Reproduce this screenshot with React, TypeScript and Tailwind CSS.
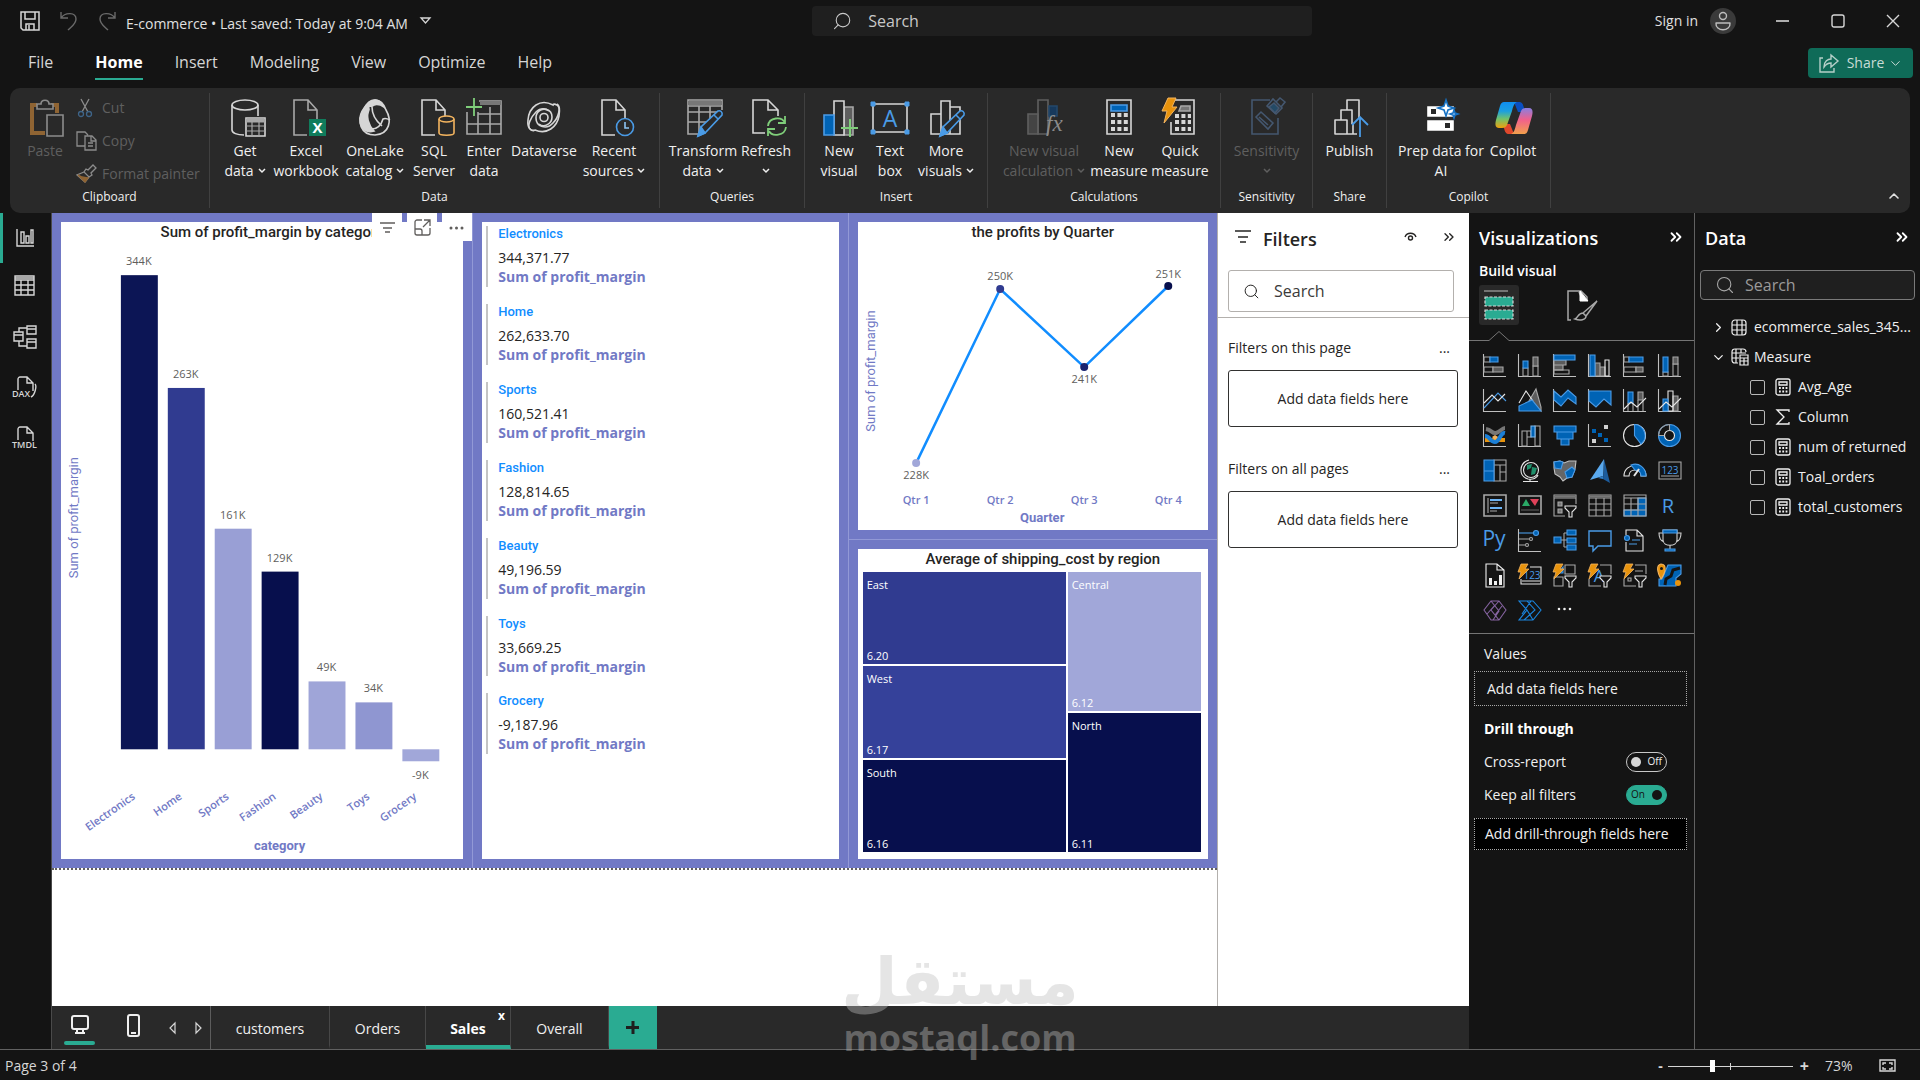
import type { ReactNode } from "react";
import { ChevronDown, ChevronRight, ChevronUp, ChevronsRight, Search } from "lucide-react";
import { clsx } from "clsx";

const LINE = "#d6d6d6";
const GRAY = "#a8a8a8";
const BLUE = "#4a9be6";
const FILL = "#0063b5";
const GREEN = "#7fce7a";
const ORANGE = "#f3b45f";

function Icon({
  w = 36,
  h = 40,
  inset = 0,
  stroke = LINE,
  sw = 1.6,
  children,
}: {
  w?: number;
  h?: number;
  inset?: number;
  stroke?: string;
  sw?: number;
  children: ReactNode;
}) {
  return (
    <svg
      width={w + inset}
      height={h}
      viewBox={`${-inset} 0 ${w + inset} ${h}`}
      fill="none"
      stroke={stroke}
      strokeWidth={sw}
      className="shrink-0 overflow-visible"
      aria-hidden
    >
      {children}
    </svg>
  );
}

const docPath = "M16 37H3V2h14l9 10v9M17 2v10h9";

const pencil = (
  <g stroke={BLUE} fill="#292929">
    <path d="M12 38l3-9 17-16c2-1 5 1 4 4L19 35z" />
    <path d="M12 38l3-9 4 6z" fill={BLUE} />
    <path d="M28 17l4 4" />
  </g>
);

const bolt = <path d="M7 0h8l-4 9h5L3 25l3-12H1z" fill="#e8930c" stroke={ORANGE} strokeWidth="1" />;

const ribbonIcons: Record<string, ReactNode> = {
  getData: (
    <Icon inset={5}>
      <ellipse cx="15" cy="7" rx="13" ry="5" />
      <path d="M2 7v25c0 3 5 5 12 5M28 7v11" />
      <path d="M16 20h19v18H16z" fill="#292929" />
      <path d="M16 22.5h19" strokeWidth="4" stroke={GRAY} />
      <path d="M16 28h19M16 33h19M22 24v14M29 24v14" stroke={GRAY} strokeWidth="1.2" />
    </Icon>
  ),
  excel: (
    <Icon inset={5}>
      <path d="M16 37H3V2h14l9 10v9M17 2v10h9" stroke={GRAY} />
      <path d="M18 21h17v17H18z" fill="#107c5c" stroke="none" />
      <text x="26.5" y="35" textAnchor="middle" fontSize="15" fontWeight="700" fill="#fff" stroke="none">
        X
      </text>
    </Icon>
  ),
  oneLake: (
    <Icon>
      <path d="M7 11c6-13 18-11 22 1 6 10 4 24-11 25C4 37-1 24 7 11z" />
      <path d="M18 2c-7 1-16 12-15 21s7 12 14 10c-6-6-8-15-5-21 4-8 11-6 15-3-2-5-6-7-9-7z" fill={LINE} />
      <path d="M14 9c0 9 4 15 11 19" stroke="#292929" strokeWidth="3" />
      <path d="M15 9c0 9 4 14 10 19M12 31c8 1 12-3 14-10 2-1 5 0 7 1" />
    </Icon>
  ),
  sql: (
    <Icon inset={5}>
      <path d={docPath} />
      <g stroke={ORANGE} fill="#292929">
        <path d="M20 21v14c0 3 15 3 15 0V21" />
        <ellipse cx="27.5" cy="21" rx="7.5" ry="3" />
      </g>
    </Icon>
  ),
  enter: (
    <Icon>
      <path d="M1 14v22h34V3H13M1 26h34M12 14v22M24 9v27M12 16h23" stroke={GRAY} />
      <path d="M14 5h21" stroke="#777" strokeWidth="4" />
      <path d="M0 9h16M8 0v18" stroke={GREEN} strokeWidth="1.8" />
    </Icon>
  ),
  dataverse: (
    <Icon>
      <path d="M23 13c-5-4-13-1-13 7 0 9 11 12 17 5 6-6 8-16 4-18s-4 0-4 0C14 0 3 9 2 22c-1 8 3 11 6 10" />
      <path d="M13 26c5 4 13 0 13-7 0-8-10-11-16-5C4 20 1 28 4 31s5 1 5 1c12 5 22-3 24-14 1-6 1-10-2-12" />
      <circle cx="18" cy="19.500" r="4" />
    </Icon>
  ),
  recent: (
    <Icon inset={5}>
      <path d={docPath} />
      <circle cx="26" cy="29" r="8.500" stroke={BLUE} fill="#292929" />
      <path d="M26 24v6h4" stroke="#8cc3f2" />
    </Icon>
  ),
  transform: (
    <Icon w={38} inset={4}>
      <path d="M14 36H2V2h34v10M2 14h31M2 24h20M13 8v28M24 8v14M2 8h34" stroke={GRAY} />
      <path d="M2 5h34" stroke="#777" strokeWidth="4" />
      {pencil}
    </Icon>
  ),
  refresh: (
    <Icon inset={6}>
      <path d="M14 35H2V2h15l10 10v6M17 2v10h10" />
      <g stroke={GREEN} strokeWidth="1.800">
        <path d="M17 28c1-9 14-10 17-3M34 18v7h-7M35 29c-1 9-14 10-17 4M17 38v-7h7" />
      </g>
    </Icon>
  ),
  newVisual: (
    <Icon inset={2}>
      <path d="M22 9h9v28h-9z" fill="#5f5f5f" stroke={GRAY} />
      <path d="M12 3h10v34H12z" fill="#292929" />
      <path d="M2 17h10v20H2z" fill={FILL} stroke={BLUE} />
      <path d="M19 30h17M28 21v18" stroke={GREEN} strokeWidth="2" />
    </Icon>
  ),
  textBox: (
    <Icon w={40}>
      <path d="M3 6h34v28H3z" />
      <path d="M1 4h4v4H1zM35 4h4v4h-4zM1 32h4v4H1zM35 32h4v4h-4z" fill={BLUE} stroke={BLUE} strokeWidth="1" />
      <text x="20" y="29" textAnchor="middle" fontSize="23" fill={BLUE} stroke="none">
        A
      </text>
    </Icon>
  ),
  moreVisuals: (
    <Icon w={38} inset={2}>
      <path d="M13 16H3v20h10zM13 3h9v33h-9zM22 9h10v27H22z" />
      {pencil}
    </Icon>
  ),
  visualCalc: (
    <Icon stroke="#5f5f5f">
      <path d="M2 16h10v20H2z" fill="#444" />
      <path d="M12 2h10v34H12z" />
      <path d="M23 8h8v10h-8z" fill="#17395c" stroke="#24486b" />
      <text x="20" y="33" fontSize="23" fontStyle="italic" fontFamily="Liberation Serif" fill="#8b8b8b" stroke="none">
        fx
      </text>
    </Icon>
  ),
  measure: (
    <Icon w={26}>
      <path d="M1 2h24v34H1z" />
      <path d="M5 7h16v6H5z" fill={FILL} stroke={BLUE} />
      <path d="M5 17h17M5 24h17M5 31h17" strokeWidth="4" strokeDasharray="4 2.400" />
    </Icon>
  ),
  quick: (
    <Icon w={34}>
      <path d="M12 2h19v34H8V24" />
      <path d="M18 8h9v5H16z" fill="#777" stroke={GRAY} />
      <path d="M12 18h16M12 24h16M12 31h16" strokeWidth="4" strokeDasharray="4 2.400" />
      <g transform="translate(-2 0)">{bolt}</g>
    </Icon>
  ),
  sensitivity: (
    <Icon inset={2} stroke="#44576f">
      <path d="M20 2H2v34h26V20" />
      <path d="M6 19l5-5 12 11-5 6zM9 19l9 8M17 8l6-7 9 9-6 6zM26 4l4-4 5 4-4 5" />
      <path d="M19 9l6 6 4-5-5-5z" fill="#244a66" />
    </Icon>
  ),
  publish: (
    <Icon inset={2}>
      <path d="M2 36V22h12v14zM8 22V12h11v14M14 12V2h12v18M14 36h10M20 26v10" strokeLinejoin="round" />
      <path d="M27 39V20M19 27l8-8 8 8" stroke={BLUE} strokeWidth="1.800" />
    </Icon>
  ),
  prep: (
    <Icon w={34} inset={2}>
      <path d="M3 9h25v9H3zM3 23h25v9H3z" fill="#fff" stroke="#fff" />
      <path d="M6 11h5v5H6zM20 25h5v5h-5z" fill="#292929" stroke="none" />
      <path d="M21 2l2 6 6 2-6 2-2 6-2-6-6-2 6-2z" fill="#fff" stroke="#1672c4" />
      <path d="M29 12l1 3 3 1-3 1-1 3-1-3-3-1 3-1z" fill="#cfe8ff" stroke="#1672c4" />
    </Icon>
  ),
  copilot: (
    <Icon w={38} h={40} stroke="none">
      <defs>
        <linearGradient id="cpA" x1="0" y1="0" x2="0" y2="1">
          <stop offset="0" stopColor="#0f8ef0" />
          <stop offset=".350" stopColor="#1b9fe0" />
          <stop offset=".650" stopColor="#72c26a" />
          <stop offset="1" stopColor="#f0a00c" />
        </linearGradient>
        <linearGradient id="cpB" x1="0" y1="1" x2="0" y2="0">
          <stop offset="0" stopColor="#8a7fe0" />
          <stop offset=".450" stopColor="#f0608c" />
          <stop offset="1" stopColor="#f2a04c" />
        </linearGradient>
      </defs>
      <g transform="translate(1 3)">
        <path d="M19 1h5c3 0 4 2 5 6l2 4h-8z" fill="#0a4fc0" />
        <path d="M19 33h-5c-3 0-4-2-5-6l-2-4h8z" fill="#e0482c" />
        <path d="M9 1h13c-3 1-4 5-5 9l-5 14c-1 2-2 3-5 3H4c-4 0-4-4-3-8L5 5c1-3 2-4 4-4z" fill="url(#cpA)" />
        <path
          d="M9 1h13c-3 1-4 5-5 9l-5 14c-1 2-2 3-5 3H4c-4 0-4-4-3-8L5 5c1-3 2-4 4-4z"
          fill="url(#cpB)"
          transform="rotate(180 19 17)"
        />
      </g>
    </Icon>
  ),
};

type Tool = { icon: string; lines: string[]; width: string; menu?: boolean; off?: boolean };

const groups: { name: string; width: string; pad: string; tools: Tool[] }[] = [
  {
    name: "Data",
    width: "w-[450px]",
    pad: "pl-[11px]",
    tools: [
      { icon: "getData", lines: ["Get", "data"], width: "w-12", menu: true },
      { icon: "excel", lines: ["Excel", "workbook"], width: "w-[74px]" },
      { icon: "oneLake", lines: ["OneLake", "catalog"], width: "w-16", menu: true },
      { icon: "sql", lines: ["SQL", "Server"], width: "w-[54px]" },
      { icon: "enter", lines: ["Enter", "data"], width: "w-[46px]" },
      { icon: "dataverse", lines: ["Dataverse"], width: "w-[74px]" },
      { icon: "recent", lines: ["Recent", "sources"], width: "w-[66px]", menu: true },
    ],
  },
  {
    name: "Queries",
    width: "w-[145px]",
    pad: "pl-2",
    tools: [
      { icon: "transform", lines: ["Transform", "data"], width: "w-[70px]", menu: true },
      { icon: "refresh", lines: ["Refresh", ""], width: "w-14", menu: true },
    ],
  },
  {
    name: "Insert",
    width: "w-[183px]",
    pad: "pl-2",
    tools: [
      { icon: "newVisual", lines: ["New", "visual"], width: "w-[52px]" },
      { icon: "textBox", lines: ["Text", "box"], width: "w-[50px]" },
      { icon: "moreVisuals", lines: ["More", "visuals"], width: "w-[62px]", menu: true },
    ],
  },
  {
    name: "Calculations",
    width: "w-[233px]",
    pad: "pl-3",
    tools: [
      { icon: "visualCalc", lines: ["New visual", "calculation"], width: "w-[88px]", menu: true, off: true },
      { icon: "measure", lines: ["New", "measure"], width: "w-[62px]" },
      { icon: "quick", lines: ["Quick", "measure"], width: "w-[60px]" },
    ],
  },
  {
    name: "Sensitivity",
    width: "w-[92px]",
    pad: "pl-0",
    tools: [{ icon: "sensitivity", lines: ["Sensitivity", ""], width: "w-full", menu: true, off: true }],
  },
  {
    name: "Share",
    width: "w-[74px]",
    pad: "pl-0",
    tools: [{ icon: "publish", lines: ["Publish"], width: "w-full" }],
  },
  {
    name: "Copilot",
    width: "w-[164px]",
    pad: "pl-[10px]",
    tools: [
      { icon: "prep", lines: ["Prep data for", "AI"], width: "w-[88px]" },
      { icon: "copilot", lines: ["Copilot"], width: "w-14" },
    ],
  },
];

function TitleBar() {
  return (
    <div className="flex h-[42px] shrink-0 items-center pl-5 text-sm text-[#e0e0e0]">
      <div className="flex flex-1 items-center">
        <button aria-label="Save">
          <Icon w={20} h={20} sw={1.5}>
            <path d="M1 1h18v18H3l-2-2zM5 1v7h10V1M6 19v-6h8v6M9 14v5" />
          </Icon>
        </button>
        <button aria-label="Undo" className="ml-5">
          <Icon w={18} h={20} stroke="#6a6a6a" sw={1.4}>
            <path d="M1 1v6h7M1 7c4-6 15-6 15 1 0 5-4 7-8 11" />
          </Icon>
        </button>
        <button aria-label="Redo" className="ml-5">
          <Icon w={18} h={20} stroke="#6a6a6a" sw={1.4}>
            <path d="M17 1v6h-7M17 7C13 1 2 1 2 8c0 5 4 7 8 11" />
          </Icon>
        </button>
        <button className="ml-2.5 flex items-center gap-3">
          <span className="pt-1.5">E-commerce • Last saved: Today at 9:04 AM</span>
          <Icon w={12} h={8} sw={1.3}>
            <path d="M1 1h9L5.500 6z" />
          </Icon>
        </button>
      </div>
      <label className="flex h-[30px] w-[500px] items-center gap-4 rounded bg-[#1f1f1f] px-5 text-[#c8c8c8]">
        <Search size={22} strokeWidth={1.3} className="-scale-x-100" />
        <input
          aria-label="Search"
          placeholder="Search"
          className="w-full bg-transparent text-base outline-none placeholder:text-[#c8c8c8]"
        />
      </label>
      <div className="flex w-[608px] items-center justify-end pr-5">
        <button>Sign in</button>
        <span className="ml-3 grid h-[26px] w-[26px] place-items-center rounded-full bg-[#3a3a3a]">
          <Icon w={16} h={20} sw={1.4} stroke="#bdbdbd">
            <circle cx="8" cy="5" r="3.500" />
            <path d="M1 12h14c1 9-15 9-14 0z" strokeLinejoin="round" />
          </Icon>
        </span>
        <button aria-label="Minimize" className="ml-10">
          <Icon w={14} h={14}>
            <path d="M0 7h13" />
          </Icon>
        </button>
        <button aria-label="Maximize" className="ml-[41px]">
          <Icon w={14} h={14} sw={1.4}>
            <rect x="1" y="1" width="12" height="12" rx="2" />
          </Icon>
        </button>
        <button aria-label="Close" className="ml-[41px]">
          <Icon w={14} h={14} sw={1.4}>
            <path d="M1 1l12 12M13 1L1 13" />
          </Icon>
        </button>
      </div>
    </div>
  );
}

const menu = ["File", "Home", "Insert", "Modeling", "View", "Optimize", "Help"];

function MenuBar() {
  return (
    <nav className="flex h-[46px] shrink-0 items-start justify-between pl-7 pr-[7px] pt-[6px]">
      <div className="flex gap-8 pt-px text-base text-[#d6d6d6]">
        {menu.map((item) => (
          <button
            key={item}
            className={clsx(
              "border-b-2 pb-[3px] leading-[26px]",
              item === "File" && "mr-2.5",
              item === "Home" ? "border-[#2aab92] font-bold text-white" : "border-transparent",
            )}
          >
            {item}
          </button>
        ))}
      </div>
      <button className="flex h-[30px] w-[105px] items-center justify-center gap-2 rounded bg-[#0f6b58] text-sm text-[#c8dcd6]">
        <Icon w={21} h={20} sw={1.4} stroke="#b5cfc8">
          <path d="M5 5H2v14h14v-4M6 14c0-6 4-8 7-8V2l7 6-7 6v-4c-3 0-5 1-7 4z" />
        </Icon>
        <span className="flex items-center gap-1">
          Share
          <ChevronDown size={15} strokeWidth={1.6} />
        </span>
      </button>
    </nav>
  );
}

function Caret() {
  return (
    <svg width="8" height="6" viewBox="0 0 8 6" fill="none" stroke="currentColor" strokeWidth="1.500" className="inline" aria-hidden>
      <path d="M1 1l3 3 3-3" />
    </svg>
  );
}

function ToolButton({ tool }: { tool: Tool }) {
  return (
    <button
      className={clsx(
        "flex flex-col items-center whitespace-nowrap text-sm leading-5",
        tool.width,
        tool.off ? "text-[#5f5f5f]" : "text-[#f0f0f0]",
      )}
    >
      {ribbonIcons[tool.icon]}
      <span className="mt-[3px] block">{tool.lines[0]}</span>
      <span className="flex h-5 items-center gap-1">
        {tool.lines[1]}
        {tool.menu && <Caret />}
      </span>
    </button>
  );
}

function Ribbon() {
  return (
    <div className="mx-[10px] flex h-[125px] shrink-0 items-stretch rounded-[10px] bg-[#292929]">
      <section className="my-[5px] flex w-[200px] flex-col justify-between border-r border-[#404040] pb-0.5 pt-[5px] text-sm text-[#5f5f5f]">
        <div className="flex">
          <button className="ml-3 flex w-[46px] flex-col items-center leading-5">
            <Icon w={36} inset={4} stroke="#8c8c8c">
              <path d="M8 7H3v28h13M22 7h6v8" stroke="#8f6433" strokeWidth="4" />
              <path d="M8 11V6h4c0-5 8-5 8 0h4v5z" fill="#292929" />
              <path d="M18 17h16v21H18z" fill="#292929" />
            </Icon>
            <span className="mt-[3px]">Paste</span>
          </button>
          <div className="ml-2 flex flex-col gap-[13px]">
            <button className="flex items-center gap-2 leading-5">
              <Icon w={18} h={20} stroke="#8c8c8c" sw={1.3}>
                <path d="M5 1l7 13M13 1L6 14" />
                <circle cx="5" cy="16" r="2.500" stroke="#3e6488" />
                <circle cx="13" cy="16" r="2.500" stroke="#3e6488" />
              </Icon>
              Cut
            </button>
            <button className="flex items-center gap-1 leading-5">
              <Icon w={22} h={20} stroke="#8c8c8c" sw={1.3}>
                <path d="M9 15H1V1h8l3 3M9 5h7l4 4v10H9zM15 5v5h5M12 12h5M12 15h5" />
              </Icon>
              Copy
            </button>
            <button className="flex items-center gap-1 leading-5">
              <Icon w={22} h={20} stroke="#8c8c8c" sw={1.3}>
                <path d="M12 6l5-5 3 3-5 5 1 2-3 2-5-5 2-3zM8 8L1 11l8 7 4-5" />
                <path d="M2 11l7 7 3-4-6-1z" fill="#8f6433" stroke="#8f6433" />
              </Icon>
              Format painter
            </button>
          </div>
        </div>
        <p className="text-center text-xs leading-[18px] text-[#f0f0f0]">Clipboard</p>
      </section>
      {groups.map((group) => (
        <section
          key={group.name}
          className={clsx(
            "my-[5px] flex flex-col justify-between border-r border-[#404040] pb-0.5 pt-[5px]",
            group.width,
          )}
        >
          <div className={clsx("flex", group.pad)}>
            {group.tools.map((tool) => (
              <ToolButton key={tool.icon} tool={tool} />
            ))}
          </div>
          <p className="text-center text-xs leading-[18px] text-[#f0f0f0]">{group.name}</p>
        </section>
      ))}
      <button aria-label="Collapse ribbon" className="mb-[9px] ml-auto mr-2 self-end text-[#e0e0e0]">
        <ChevronUp size={16} strokeWidth={2.4} />
      </button>
    </div>
  );
}

const docMini = "M6 14V3c0-1 1-2 2-2h7l6 6v8M15 1v6h6";

const views = [
  {
    name: "Report view",
    icon: <path d="M5 3v17h17M9 6h3v11H9zM14 10h3v7h-3zM19 4h2v13h-2z" />,
  },
  { name: "Table view", icon: <path d="M3 0h19v19H3zM3 4h19M3 9h19M3 14h19M9 4v15M16 4v15M3 2h19" /> },
  {
    name: "Model view",
    icon: <path d="M2 6h9v9H2zM2 9h9M15 0h9v8h-9zM15 3h9M15 13h9v9h-9zM15 16h9M7 6V2h8M7 15v5h8" />,
  },
  {
    name: "DAX query view",
    icon: (
      <>
        <path d={docMini} />
        <path d="M23 8c2 2 0 11-4 13" />
        <text x="0" y="21" fontSize="9" fontWeight="600" fill={LINE} stroke="none">
          DAX
        </text>
      </>
    ),
  },
  {
    name: "TMDL view",
    icon: (
      <>
        <path d={docMini} />
        <text x="0" y="22" fontSize="9" fontWeight="600" fill={LINE} stroke="none">
          TMDL
        </text>
      </>
    ),
  },
];

function ViewRail() {
  return (
    <nav className="flex w-[52px] shrink-0 flex-col border-r border-[#4a4a4a]">
      {views.map((view, i) => (
        <button
          key={view.name}
          aria-label={view.name}
          className={clsx(
            "grid h-[50px] place-items-center border-l-[3px] pr-1",
            i === 0 ? "border-[#2aab92]" : "border-transparent",
          )}
        >
          <Icon w={26} h={25} sw={1.4}>
            {view.icon}
          </Icon>
        </button>
      ))}
    </nav>
  );
}

const bars = [
  { name: "Electronics", label: "344K", top: 53, height: 475, color: "#0c1555" },
  { name: "Home", label: "263K", top: 166, height: 362, color: "#303b90" },
  { name: "Sports", label: "161K", top: 307, height: 221, color: "#999fd5" },
  { name: "Fashion", label: "129K", top: 350, height: 178, color: "#070f4d" },
  { name: "Beauty", label: "49K", top: 460, height: 68, color: "#9fa5d8" },
  { name: "Toys", label: "34K", top: 481, height: 47, color: "#8f96d1" },
  { name: "Grocery", label: "-9K", top: 528, height: 12, color: "#a1a7d9" },
];

function CardTitle({ children }: { children: ReactNode }) {
  return (
    <h2 className="h-5 shrink-0 pl-5 text-center font-[Roboto,sans-serif] text-[15px] font-medium leading-5 text-[#252423]">
      {children}
    </h2>
  );
}

function BarChart() {
  return (
    <div className="relative flex flex-col bg-[#7179c5] p-[9px]">
      <div className="flex min-h-0 flex-1 flex-col bg-white">
        <CardTitle>Sum of profit_margin by category</CardTitle>
        <svg viewBox="0 20 403 618" className="min-h-0 w-full flex-1" fontSize="11" fill="#605e5c" textAnchor="middle">
          {bars.map((bar, i) => (
            <g key={bar.name}>
              <rect x={60 + 47 * i} y={bar.top} width="37" height={bar.height} fill={bar.color} />
              <text x={78 + 47 * i} y={bar.name === "Grocery" ? 558 : bar.top - 10}>
                {bar.label}
              </text>
              <text
                textAnchor="end"
                fontSize="11"
                fontWeight="600"
                fill="#7179c5"
                transform={`translate(${75 + 47 * i} 577) rotate(-35)`}
              >
                {bar.name}
              </text>
            </g>
          ))}
          <text fontSize="13" fill="#7179c5" fontFamily="Roboto" transform="translate(17 296) rotate(-90)">
            Sum of profit_margin
          </text>
          <text x="219" y="629" fontSize="13" fontWeight="700" fill="#7179c5" fontFamily="Roboto">
            category
          </text>
        </svg>
      </div>
      <div className="absolute right-0 top-0 flex gap-[5px]">
        {["Filter", "Focus mode", "More options"].map((name) => (
          <button key={name} aria-label={name} className="grid h-7 w-[30px] place-items-center bg-white">
            <Icon w={18} h={18} sw={1.3} stroke="#605e5c">
              {name === "Filter" && <path d="M2 5h15M5 10h9M7 14h5" />}
              {name === "Focus mode" && (
                <path d="M9 2H4c-1 0-2 1-2 2v11c0 1 1 2 2 2h11c1 0 2-1 2-2v-5M11 2h6v6M17 2l-7 7M2 11h5c1 0 2 1 2 2v4" />
              )}
              {name === "More options" && <path d="M3 10h14" strokeWidth="3" strokeLinecap="round" strokeDasharray="0 5.500" />}
            </Icon>
          </button>
        ))}
      </div>
    </div>
  );
}

const totals = [
  ["Electronics", "344,371.77"],
  ["Home", "262,633.70"],
  ["Sports", "160,521.41"],
  ["Fashion", "128,814.65"],
  ["Beauty", "49,196.59"],
  ["Toys", "33,669.25"],
  ["Grocery", "-9,187.96"],
];

function MultiRowCard() {
  return (
    <div className="flex flex-col bg-[#7179c5] p-[9px]">
      <ul className="grid flex-1 auto-rows-fr bg-white pb-[88px] pl-1 pt-1">
        {totals.map(([name, value]) => (
          <li key={name} className="mb-[17px] border-l-2 border-[#c4c4c4] pl-2.5">
            <p className="font-[Roboto,sans-serif] text-[13px] font-medium leading-4 text-[#118dff]">{name}</p>
            <p className="mt-1.5 text-sm leading-5 text-[#252423]">{value}</p>
            <p className="text-sm font-bold leading-[18px] text-[#7179c5]">Sum of profit_margin</p>
          </li>
        ))}
      </ul>
    </div>
  );
}

const quarters = [
  { x: 58, y: 241, ly: 257, label: "228K", color: "#a1a7d9" },
  { x: 142, y: 67, ly: 58, label: "250K", color: "#303b90" },
  { x: 226, y: 145, ly: 161, label: "241K", color: "#1a2470" },
  { x: 310, y: 64, ly: 56, label: "251K", color: "#070f4d" },
];

function LineChart() {
  return (
    <div className="flex min-h-0 flex-col bg-[#7179c5] p-[9px]">
      <div className="flex min-h-0 flex-1 flex-col bg-white">
        <CardTitle>the profits by Quarter</CardTitle>
        <svg viewBox="0 20 350 288" className="min-h-0 w-full flex-1" fontSize="11" fill="#605e5c" textAnchor="middle">
          <polyline
            points={quarters.map((q) => `${q.x},${q.y}`).join(" ")}
            fill="none"
            stroke="#118dff"
            strokeWidth="2.500"
          />
          {quarters.map((q, i) => (
            <g key={q.label}>
              <circle cx={q.x} cy={q.y} r="4" fill={q.color} />
              <text x={q.x} y={q.ly}>
                {q.label}
              </text>
              <text x={q.x} y="282" fontWeight="600" fill="#7179c5">
                Qtr {i + 1}
              </text>
            </g>
          ))}
          <text fontSize="13" fill="#7179c5" fontFamily="Roboto" transform="translate(17 149) rotate(-90)">
            Sum of profit_margin
          </text>
          <text x="184" y="300" fontSize="13" fontWeight="700" fill="#7179c5" fontFamily="Roboto">
            Quarter
          </text>
        </svg>
      </div>
    </div>
  );
}

function Region({ name, value, color }: { name: string; value: string; color: string }) {
  return (
    <div
      className={clsx("flex flex-1 flex-col justify-between px-1 pt-[5px] text-[11px] leading-4 text-white", color)}
    >
      <span>{name}</span>
      <span>{value}</span>
    </div>
  );
}

function Treemap() {
  return (
    <div className="flex min-h-0 flex-col bg-[#7179c5] p-[9px]">
      <div className="flex flex-1 flex-col bg-white">
        <CardTitle>Average of shipping_cost by region</CardTitle>
        <div className="mb-[7px] ml-[5px] mr-[7px] mt-[3px] grid flex-1 grid-cols-[204fr_134fr] gap-0.5">
          <div className="flex flex-col gap-0.5">
            <Region name="East" value="6.20" color="bg-[#303b90]" />
            <Region name="West" value="6.17" color="bg-[#35419a]" />
            <Region name="South" value="6.16" color="bg-[#070f4d]" />
          </div>
          <div className="flex flex-col gap-0.5">
            <Region name="Central" value="6.12" color="bg-[#a1a7d9]" />
            <Region name="North" value="6.11" color="bg-[#070f4d]" />
          </div>
        </div>
      </div>
    </div>
  );
}

function ReportCanvas() {
  return (
    <main className="min-w-0 flex-1 border-r border-[#b3b0ad] bg-white">
      <div className="grid aspect-video w-full grid-cols-[421fr_375fr_369fr] gap-px bg-[#9299d6]">
        <BarChart />
        <MultiRowCard />
        <div className="grid min-h-0 grid-rows-[326fr_328fr] gap-px">
          <LineChart />
          <Treemap />
        </div>
      </div>
      <div className="border-t-2 border-dotted border-[#605e5c]" />
    </main>
  );
}

function DropBox({ title }: { title: string }) {
  return (
    <section className="mb-8 pl-[10px] pr-[11px] text-[#252423]">
      <div className="flex items-center justify-between pr-2 text-sm leading-5">
        <h3>{title}</h3>
        <button aria-label={`${title} options`}>...</button>
      </div>
      <button className="mt-3 block h-[57px] w-full rounded-[3px] border border-[#323130] text-sm">
        Add data fields here
      </button>
    </section>
  );
}

function FiltersPane() {
  return (
    <aside className="w-[251px] shrink-0 bg-white text-[#252423]">
      <div className="flex h-[57px] items-center pb-[9px] pl-[17px] pr-3">
        <Icon w={16} h={14} stroke="#252423">
          <path d="M0 1h16M3 7h10M5 12h6" />
        </Icon>
        <h2 className="ml-3 flex-1 pt-1 text-lg font-semibold leading-6">Filters</h2>
        <button aria-label="Show filter pane" className="mr-6">
          <Icon w={13} h={10} sw={1.4} stroke="#252423">
            <path d="M1 5c2-5 9-5 11 0" />
            <circle cx="6.500" cy="6" r="2" />
          </Icon>
        </button>
        <button aria-label="Collapse filters">
          <ChevronsRight size={16} />
        </button>
      </div>
      <div className="border-b border-[#b3b0ad] pb-[5px] pl-[10px] pr-[15px]">
        <label className="flex h-[42px] items-center gap-3.5 rounded-[3px] border border-[#b3b0ad] pl-3.5">
          <Search size={17} strokeWidth={1.4} className="shrink-0" />
          <input
            aria-label="Search filters"
            placeholder="Search"
            className="w-full bg-transparent text-base outline-none placeholder:text-[#3b3a39]"
          />
        </label>
      </div>
      <div className="pt-5">
        <DropBox title="Filters on this page" />
        <DropBox title="Filters on all pages" />
      </div>
    </aside>
  );
}

const axis = <path d="M.500 0v22.500H23" stroke="#c0c0c0" />;
const boltSmall = <path d="M3 0h7L7 5h4L1 15l2-7H0z" fill="#e8930c" stroke={ORANGE} strokeWidth=".8" />;
const funnelSmall = <path d="M12 12h11v2l-4 4v5h-3v-5l-4-4z" fill="#141414" stroke="#e6e6e6" />;

const visuals: { name: string; art: ReactNode }[] = [
  {
    name: "Stacked bar",
    art: (
      <>
        {axis}
        <path d="M1 3h6v5H1zM1 13h9v5H1z" />
        <path d="M7 3h8v5H7z" fill={FILL} stroke={BLUE} />
        <path d="M10 13h10v5H10z" fill="#5c5c5c" />
      </>
    ),
  },
  {
    name: "Stacked column",
    art: (
      <>
        {axis}
        <path d="M5 14h5v8H5zM15 12h5v10h-5z" />
        <path d="M5 7h5v7H5z" fill={FILL} stroke={BLUE} />
        <path d="M15 3h5v9h-5z" fill="#5c5c5c" />
      </>
    ),
  },
  {
    name: "Clustered bar",
    art: (
      <>
        {axis}
        <path d="M1 6h12v5H1zM1 11h9v5H1z" fill="#5c5c5c" />
        <path d="M1 16h15v4H1z" />
        <path d="M1 1h21v5H1z" fill={FILL} stroke={BLUE} />
      </>
    ),
  },
  {
    name: "Clustered column",
    art: (
      <>
        {axis}
        <path d="M7 9h5v13H7zM12 13h5v9h-5z" fill="#5c5c5c" />
        <path d="M17 6h4v16h-4z" stroke="#e6e6e6" />
        <path d="M2 1h5v21H2z" fill={FILL} stroke={BLUE} />
      </>
    ),
  },
  {
    name: "100% stacked bar",
    art: (
      <>
        {axis}
        <path d="M1 3h5v5H1zM1 13h12v5H1z" />
        <path d="M6 3h14v5H6z" fill={FILL} stroke={BLUE} />
        <path d="M13 13h7v5h-7z" fill="#5c5c5c" />
      </>
    ),
  },
  {
    name: "100% stacked column",
    art: (
      <>
        {axis}
        <path d="M5 18h5v4H5zM15 10h5v12h-5z" />
        <path d="M5 3h5v15H5z" fill={FILL} stroke={BLUE} />
        <path d="M15 3h5v7h-5z" fill="#5c5c5c" />
      </>
    ),
  },
  {
    name: "Line",
    art: (
      <>
        {axis}
        <path d="M1 19L15 4l8 8" stroke={BLUE} />
        <path d="M1 14l8-8 6 6 7-7" stroke="#e6e6e6" />
      </>
    ),
  },
  {
    name: "Area",
    art: (
      <>
        <path d="M11 12l7-12 5 18v4z" fill="#5c5c5c" />
        <path d="M1 14L8 2l7 10" stroke="#e6e6e6" />
        <path d="M1 22v-5l13-6 9 11z" fill={FILL} stroke={BLUE} />
      </>
    ),
  },
  {
    name: "Stacked area",
    art: (
      <>
        {axis}
        <path d="M1 2l7 6 7-7 8 7v7l-8-6-7 8-7-6z" fill={FILL} stroke={BLUE} />
      </>
    ),
  },
  {
    name: "100% area",
    art: (
      <>
        {axis}
        <path d="M1 2h22v14l-7-6-8 8-7-6z" fill={FILL} stroke={BLUE} />
      </>
    ),
  },
  {
    name: "Line and stacked column",
    art: (
      <>
        {axis}
        <path d="M5 3h5v11H5z" fill={FILL} stroke={BLUE} />
        <path d="M15 3h5v8h-5z" fill="#5c5c5c" />
        <path d="M5 14v8M10 14v8M15 11v11M20 11v11" />
        <path d="M1 20l7-7 6 5 9-9" stroke="#e6e6e6" />
      </>
    ),
  },
  {
    name: "Line and clustered column",
    art: (
      <>
        {axis}
        <path d="M15 7h5v15h-5z" fill="#5c5c5c" />
        <path d="M10 2h5v20h-5z" stroke="#e6e6e6" />
        <path d="M5 10h5v12H5z" fill={FILL} stroke={BLUE} />
        <path d="M1 20l7-7 6 5 9-9" stroke="#e6e6e6" />
      </>
    ),
  },
  {
    name: "Ribbon",
    art: (
      <>
        {axis}
        <path d="M2 16h20" stroke="#e8930c" strokeWidth="4" />
        <path d="M3 5c6 1 6 5 10 4s6-5 9-5" stroke="#777" strokeWidth="4" />
        <path d="M2 12c5 0 5 6 10 6s5-10 10-9" stroke="#1b7fd6" strokeWidth="4" />
        <path d="M9 13l3-2 3 2-3 3z" fill={ORANGE} stroke="none" />
      </>
    ),
  },
  {
    name: "Waterfall",
    art: (
      <>
        {axis}
        <path d="M4 7h5v15H4zM9 7h4v6H9zM17 2h5v20h-5z" />
        <path d="M13 2h4v11h-4z" fill={FILL} stroke="#7db9ef" />
      </>
    ),
  },
  {
    name: "Funnel",
    art: (
      <g fill={FILL} stroke={BLUE}>
        <path d="M1 2h22v6H1zM4 8h16v7H4zM8 15h8v6H8z" />
      </g>
    ),
  },
  {
    name: "Scatter",
    art: (
      <>
        {axis}
        <path d="M4 5h4v4H4zM10 9h4v4h-4zM16 14h4v4h-4z" fill={FILL} stroke="none" />
        <path d="M16 1h4v4h-4zM4 15h4v4H4z" fill="#d0d0d0" stroke="none" />
      </>
    ),
  },
  {
    name: "Pie",
    art: (
      <>
        <circle cx="11.500" cy="11.500" r="11" stroke="#e6e6e6" />
        <path d="M11.500 0.500A11 11 0 0 1 18 20l-6.500-8.500z" fill={FILL} stroke={BLUE} />
      </>
    ),
  },
  {
    name: "Donut",
    art: (
      <>
        <circle cx="11.500" cy="11.500" r="8" stroke={FILL} strokeWidth="6" />
        <path d="M3.500 11.500a8 8 0 0 1 8-8" stroke="#141414" strokeWidth="6" />
        <circle cx="11.500" cy="11.500" r="11" stroke={BLUE} />
        <circle cx="11.500" cy="11.500" r="5" stroke="#e6e6e6" />
        <path d="M.500 11.500a11 11 0 0 1 11-11" stroke="#9a9a9a" />
        <path d="M.500 11.500h6M11.500.500v6" />
      </>
    ),
  },
  {
    name: "Treemap",
    art: (
      <>
        <path d="M11 1h12v5H11zM11 6h6v16h-6zM17 6h6v7h-6zM17 13h6v9h-6z" />
        <path d="M1 1h10v11H1zM1 12h10v10H1z" fill={FILL} stroke={BLUE} />
      </>
    ),
  },
  {
    name: "Map",
    art: (
      <>
        <circle cx="13" cy="11" r="7.500" stroke="#e6e6e6" />
        <path d="M11 1C1 4 0 17 10 20c5 1 9-1 10-4M12 20v3M5 22.500h15" stroke="#e6e6e6" />
        <path d="M9 6l5-1-1 4-4 2zM14 8l5 1-2 6-4 1z" fill="#1f8f6a" stroke="none" />
      </>
    ),
  },
  {
    name: "Filled map",
    art: (
      <>
        <path d="M1 3l6-1 4 2 5-2h7l-1 8-3 8-5 1-4 3-3-4-5-3-1-6z" fill="#666" stroke="#c0c0c0" />
        <path d="M1 3l6-1 3 1-2 7-6-1zM12 13l7-5 3 3-3 7-5 1z" fill={FILL} stroke={BLUE} />
      </>
    ),
  },
  {
    name: "Azure map",
    art: (
      <>
        <path d="M16 0l6 24-7-4z" fill="#1c5c9c" stroke="none" />
        <path d="M16 0L2 21l13-4z" fill="#5aa9ee" stroke="none" />
        <path d="M15 17l-5 2 5 1z" fill="#2e7fcb" stroke="none" />
      </>
    ),
  },
  {
    name: "Gauge",
    art: (
      <>
        <path d="M1 17C1 3 23 3 23 17h-5c0-8-12-8-12 0z" stroke="#e6e6e6" />
        <path d="M8 6c8-3 15 3 15 11h-5c0-4-3-6-6-6z" fill={FILL} stroke={BLUE} />
        <path d="M11 17l5-7" stroke="#e6e6e6" strokeWidth="2" />
      </>
    ),
  },
  {
    name: "Card",
    art: (
      <>
        <path d="M1 3h22v17H1zM3 17h18" />
        <text x="12" y="15" textAnchor="middle" fontSize="10" fill={BLUE} stroke="none">
          123
        </text>
      </>
    ),
  },
  {
    name: "Multi-row card",
    art: (
      <>
        <path d="M1 1h22v21H1z" strokeWidth="1.600" />
        <path d="M5 4v15M7 9h8M7 17h7" />
        <path d="M7 6h12M7 14h12" stroke="#6cb4f5" strokeWidth="2" />
      </>
    ),
  },
  {
    name: "KPI",
    art: (
      <>
        <path d="M1 2h22v18H1z" strokeWidth="1.600" />
        <path d="M4 12l4-7 4 7z" fill="#2aa866" stroke="none" />
        <path d="M12 5h9l-4 7z" fill="#e0425a" stroke="none" />
        <path d="M3 16h18" stroke="#5c5c5c" />
      </>
    ),
  },
  {
    name: "Slicer",
    art: (
      <>
        <path d="M12 22H1V1h22v9M1 4h22" />
        <path d="M1 2.500h22" stroke="#777" strokeWidth="2" />
        <path d="M5 8h4v4H5zM5 15h4v4H5z" fill="#777" />
        {funnelSmall}
      </>
    ),
  },
  {
    name: "Table",
    art: (
      <>
        <path d="M1 1h22v21H1zM1 4h22M1 10h22M1 16h22M8 4v18M16 4v18" />
        <path d="M1 2.500h22" stroke="#777" strokeWidth="2" />
      </>
    ),
  },
  {
    name: "Matrix",
    art: (
      <>
        <path d="M15 4h8v18H1v-6h14z" fill={FILL} stroke={BLUE} />
        <path d="M1 1h22v21H1zM1 4h22M1 10h22M1 16h22M8 4v18M15 4v18" />
      </>
    ),
  },
  {
    name: "R script",
    art: (
      <text x="10" y="19" textAnchor="middle" fontSize="20" fill={BLUE} stroke="none">
        R
      </text>
    ),
  },
  {
    name: "Python script",
    art: (
      <text x="11" y="17" textAnchor="middle" fontSize="21" fill={BLUE} stroke="none">
        Py
      </text>
    ),
  },
  {
    name: "Key influencers",
    art: (
      <>
        {axis}
        <path d="M1 4h15" stroke={BLUE} />
        <circle cx="18" cy="4" r="2.500" fill={FILL} stroke={BLUE} />
        <path d="M1 10h10M1 16h6" />
        <circle cx="13" cy="10" r="1.500" />
        <circle cx="9" cy="16" r="1.500" />
      </>
    ),
  },
  {
    name: "Decomposition tree",
    art: (
      <>
        <path d="M8 11h6M11 4v14M11 4h3M11 18h3" />
        <path d="M1 8h7v6H1zM14 1h9v5h-9zM14 9h9v5h-9zM14 16h9v5h-9z" fill={FILL} stroke={BLUE} />
      </>
    ),
  },
  { name: "Q&A", art: <path d="M1 2h22v15H10l-5 5v-5H1z" stroke={BLUE} strokeWidth="1.400" /> },
  {
    name: "Narrative",
    art: (
      <>
        <path d="M3 6V1h11l6 6v15H3v-9M14 1v6h6" stroke="#e6e6e6" />
        <circle cx="4" cy="9" r="2.500" fill={FILL} stroke={BLUE} />
        <path d="M9 11h8M6 15h8" stroke={BLUE} />
      </>
    ),
  },
  {
    name: "Goals",
    art: (
      <>
        <path d="M5 1h14v10c0 7-14 7-14 0zM5 4H1c0 6 2 8 5 9M19 4h4c0 6-2 8-5 9M12 16v4" stroke="#d0d0d0" />
        <path d="M5 1h14v3H5zM7 20h10v2H7z" fill={FILL} stroke={BLUE} />
      </>
    ),
  },
  {
    name: "Paginated report",
    art: (
      <>
        <path d="M3 0h11l7 6v17H3zM14 0v6h7" stroke="#f0f0f0" />
        <path d="M6 14h3v7H6zM11 17h3v4h-3zM16 11h3v10h-3z" fill="#f0f0f0" stroke="none" />
      </>
    ),
  },
  {
    name: "New card",
    art: (
      <>
        <path d="M12 3h11v17H3v-5M4 17h18" stroke="#e6e6e6" />
        <text x="14" y="15" textAnchor="middle" fontSize="10" fill={BLUE} stroke="none">
          123
        </text>
        {boltSmall}
      </>
    ),
  },
  {
    name: "Button slicer",
    art: (
      <>
        <path d="M12 1h10v9H12zM1 13h9v9H1z" />
        <path d="M6 9h4V3z" fill={FILL} stroke={BLUE} />
        {boltSmall}
        {funnelSmall}
      </>
    ),
  },
  {
    name: "Text slicer",
    art: (
      <>
        <path d="M12 1h11v9M1 15v7h12" />
        <text x="11" y="18" textAnchor="middle" fontSize="17" fill={BLUE} stroke="none">
          A
        </text>
        {boltSmall}
        {funnelSmall}
      </>
    ),
  },
  {
    name: "List slicer",
    art: (
      <>
        <path d="M12 1h11v9M1 15v7h12M12 7h8M5 14h3v3H5z" />
        {boltSmall}
        {funnelSmall}
      </>
    ),
  },
  {
    name: "ArcGIS map",
    art: (
      <>
        <path d="M10 1h13v9l-5 4v8H1v-7h3z" fill={FILL} stroke={BLUE} />
        <path d="M22 4l-7 2-2 6-5 3-1 6" stroke="#141414" strokeWidth="3" />
        <path d="M3 15C-1 8-2 1 3 0c6 0 5 8 0 15z" fill="#e8930c" stroke={ORANGE} />
        <circle cx="3.500" cy="4.500" r="1.500" fill="#141414" stroke="none" />
        <circle cx="20" cy="19" r="3" fill="#e8930c" stroke="none" />
      </>
    ),
  },
  {
    name: "Power Apps",
    art: (
      <g stroke="#8563a0">
        <path d="M8 2h8l7 9-7 10H8L1 11zM8 2l8 10-6 9M16 2l-8 9 8 10M4 15l8-9M12 16l7-9" />
      </g>
    ),
  },
  {
    name: "Power Automate",
    art: <path d="M1 2h14l8 9-8 10H1l8-10zM9 2l8 9-11 10M13 2L4 15M15 21L9 11" stroke="#1a86e0" />,
  },
  {
    name: "Get more visuals",
    art: <path d="M6 10h13" stroke="#f0f0f0" strokeWidth="2.600" strokeLinecap="round" strokeDasharray="0 5.500" />,
  },
];

function Toggle({ label, on }: { label: string; on?: boolean }) {
  return (
    <label className="flex h-[33px] items-center justify-between pl-[10px] pr-5 text-sm">
      {label}
      <input type="checkbox" role="switch" className="sr-only" defaultChecked={on} />
      <span
        className={clsx(
          "flex h-5 w-[41px] items-center rounded-full border px-1 text-[10px]",
          on ? "flex-row-reverse justify-between border-[#2aab92] bg-[#2aab92] text-[#141414]" : "justify-between border-[#c8c8c8]",
        )}
        aria-hidden
      >
        <i className={clsx("h-2.5 w-2.5 rounded-full", on ? "bg-[#141414]" : "bg-[#d6d6d6]")} />
        {on ? "On" : "Off"}
      </span>
    </label>
  );
}

function PaneHeader({ title }: { title: string }) {
  return (
    <div className="flex items-center justify-between pb-2 pr-[9px] pt-3">
      <h2 className="text-lg font-semibold leading-[26px] text-white">{title}</h2>
      <button aria-label={`Collapse ${title}`} className="pb-0.5 text-white">
        <ChevronsRight size={18} strokeWidth={2.4} />
      </button>
    </div>
  );
}

function VisualizationsPane() {
  return (
    <aside className="w-[226px] shrink-0 border-r border-[#616161] text-[#f0f0f0]">
      <div className="pl-[10px]">
        <PaneHeader title="Visualizations" />
        <p className="text-sm font-semibold leading-6 text-white">Build visual</p>
        <div className="mt-0.5 flex gap-[43px]">
          <button aria-label="Build" className="grid h-10 w-10 place-items-center rounded-[3px] bg-[#292929]">
            <Icon w={30} h={32} sw={1.2}>
              <path d="M0 2h24" stroke="#a8a8a8" />
              <path d="M1 8h28v9H1zM1 21h28v9H1z" fill="#2aab92" strokeDasharray="3 1.500" />
            </Icon>
          </button>
          <button aria-label="Format" className="grid h-10 w-10 place-items-center">
            <Icon w={32} h={32} stroke={GRAY} sw={1.5}>
              <path d="M5 31H2V2h13l6 6v4M17 12l-4-9" />
              <path d="M14 2l8 10h-8z" fill="#fff" stroke="#fff" strokeWidth="1" />
              <path d="M31 12L20 27l-3-3zM20 27c0 4-6 5-11 3 3-1 3-6 8-6z" fill="#141414" />
            </Icon>
          </button>
        </div>
      </div>
      <svg viewBox="0 0 225 10" className="mt-[6px] block h-2.5 w-full" fill="none" stroke="#757575" aria-hidden>
        <path d="M0 9.500h20l10-9 10 9h185" />
      </svg>
      <div className="grid grid-cols-[repeat(6,35px)] gap-y-3 pl-[14px] pt-[13px]">
        {visuals.map((visual) => (
          <button key={visual.name} aria-label={visual.name} className="w-6">
            <Icon w={24} h={23} stroke="#a8a8a8" sw={1.1}>
              {visual.art}
            </Icon>
          </button>
        ))}
      </div>
      <div className="mt-[11px] border-t border-[#757575] pl-[5px] pr-[7px] pt-[10px] text-sm leading-5">
        <p className="pl-[10px]">Values</p>
        <button className="mb-3 mt-[7px] block h-[35px] w-full border border-dotted border-[#a8a8a8] pl-3 text-left">
          Add data fields here
        </button>
        <h3 className="pb-[5px] pl-[10px] font-bold leading-[22px] text-white">Drill through</h3>
        <Toggle label="Cross-report" />
        <Toggle label="Keep all filters" on />
        <button className="mt-[7px] block h-8 w-full whitespace-nowrap border border-dotted border-[#a8a8a8] bg-black pl-2.5 text-left">
          Add drill-through fields here
        </button>
      </div>
    </aside>
  );
}

const calculator = (
  <>
    <rect x="1" y="1" width="14" height="16" rx="2" />
    <path d="M4 4h8v3H4z" />
    <path d="M4 10h9M4 13.500h9" strokeWidth="1.800" strokeDasharray="1.800 1.500" />
  </>
);

const fields = ["Avg_Age", "Column", "num of returned", "Toal_orders", "total_customers"];

function DataPane() {
  return (
    <aside className="w-[225px] shrink-0 overflow-hidden pl-[5px] pr-[5px] text-sm text-[#f0f0f0]">
      <div className="-mr-[5px] pl-[5px]">
        <PaneHeader title="Data" />
      </div>
      <label className="mt-[11px] flex h-[30px] items-center gap-2.5 rounded border border-[#7a7a7a] bg-[#1f1f1f] pl-3.5">
        <Search size={20} strokeWidth={1.3} className="shrink-0 text-[#a8a8a8]" />
        <input
          aria-label="Search data"
          placeholder="Search"
          className="w-full bg-transparent text-base outline-none placeholder:text-[#9a9a9a]"
        />
      </label>
      <div className="mt-3">
        <button className="flex h-[30px] w-full items-center whitespace-nowrap pl-[11px]">
          <ChevronRight size={15} className="shrink-0" />
          <span className="ml-[5px]">
            <Icon w={16} h={17} sw={1.2} stroke="#f0f0f0">
              <rect x="1" y="1" width="14" height="15" rx="3" />
              <path d="M6 1v15M11 1v15M1 6h14M1 11h14" />
            </Icon>
          </span>
          <span className="ml-[7px]">ecommerce_sales_345...</span>
        </button>
        <button className="flex h-[30px] w-full items-center pl-[11px]">
          <ChevronDown size={15} />
          <span className="ml-[5px]">
            <Icon w={18} h={18} sw={1.2} stroke="#f0f0f0">
              <path d="M7 15H4c-2 0-3-1-3-3V4c0-2 1-3 3-3h8c2 0 3 1 3 3M5 1v14M10 1v4M1 5h14M1 10h7" />
              <path d="M9 7h8v10H9zM9 10h8M9 13h8M13 10v7" />
            </Icon>
          </span>
          <span className="ml-[5px]">Measure</span>
        </button>
        {fields.map((field) => (
          <label key={field} className="flex h-[30px] items-center pl-[50px]">
            <input
              type="checkbox"
              className="h-[15px] w-[15px] shrink-0 appearance-none rounded-[2px] border border-[#b8b8b8]"
            />
            <span className="ml-2.5">
              <Icon w={16} h={18} sw={1.3} stroke="#f0f0f0">
                {field === "Column" ? <path d="M14 4V2H2l7 7-7 7h12v-2" /> : calculator}
              </Icon>
            </span>
            <span className="ml-[7px] whitespace-nowrap">{field}</span>
          </label>
        ))}
      </div>
    </aside>
  );
}

const pages = [
  { name: "customers", width: "w-[119px]" },
  { name: "Orders", width: "w-[96px]" },
  { name: "Sales", width: "w-[85px]" },
  { name: "Overall", width: "w-[98px]" },
];

function PageTabs() {
  return (
    <div className="relative flex h-[43px] shrink-0 bg-[#292929] text-sm text-[#f0f0f0]">
      <div className="flex w-[159px] items-center border-r border-[#5c5c5c] pl-3">
        <button
          aria-label="Desktop layout"
          className="flex h-full w-[31px] flex-col items-center justify-between pb-1 pt-[9px]"
        >
          <Icon w={20} h={20} sw={2} stroke="#f0f0f0">
            <rect x="2" y="1" width="16" height="13" rx="2" />
            <path d="M7 14v4M13 14v4M5 18h10" />
          </Icon>
          <span className="h-1 w-full rounded-full bg-[#2aab92]" />
        </button>
        <button aria-label="Mobile layout" className="mb-1 ml-8">
          <Icon w={14} h={24} sw={2} stroke="#f0f0f0">
            <rect x="1" y="1" width="11" height="21" rx="2" />
            <path d="M4 19h5" />
          </Icon>
        </button>
        <button aria-label="Previous page" className="ml-7">
          <Icon w={8} h={12} sw={1.2}>
            <path d="M6 1v10L1 6z" />
          </Icon>
        </button>
        <button aria-label="Next page" className="ml-[18px]">
          <Icon w={8} h={12} sw={1.2}>
            <path d="M1 1v10l5-5z" />
          </Icon>
        </button>
      </div>
      {pages.map((page) => (
        <button
          key={page.name}
          className={clsx(
            "relative border-b-4 border-r border-r-[#474747] pt-1.5",
            page.width,
            page.name === "Sales" ? "border-b-[#2aab92] font-bold text-white" : "border-b-transparent",
          )}
        >
          {page.name}
          {page.name === "Sales" && <span className="absolute right-[5px] top-0.5 text-xs">x</span>}
        </button>
      ))}
      <button aria-label="New page" className="grid w-12 place-items-center bg-[#2aab92]">
        <Icon w={16} h={16} sw={3} stroke="#1f1f1f">
          <path d="M8 1v13M1 7.500h13" />
        </Icon>
      </button>
      <div className="pointer-events-none absolute left-[793px] top-[-62px] flex w-[230px] flex-col items-center leading-none text-[#c0c0c0] opacity-40">
        <span lang="ar" dir="rtl" className="whitespace-nowrap font-['DejaVu_Sans',sans-serif] text-[65px] font-bold leading-[76px]">
          مستقل
        </span>
        <span className="font-['Open_Sans',sans-serif] text-4xl font-bold leading-[36px]">mostaql.com</span>
      </div>
    </div>
  );
}

function StatusBar() {
  return (
    <footer className="flex h-[31px] shrink-0 items-center justify-between border-t border-[#616161] pl-[5px] pr-[23px] pt-0.5 text-sm text-[#d6d6d6]">
      <span>Page 3 of 4</span>
      <div className="flex items-center">
        <button aria-label="Zoom out" className="mr-[5px] font-bold">
          -
        </button>
        <input
          type="range"
          aria-label="Zoom"
          min="10"
          max="190"
          defaultValue="73"
          className="h-4 w-[125px] appearance-none bg-[linear-gradient(#d6d6d6,#d6d6d6),linear-gradient(#d6d6d6,#d6d6d6)] bg-[length:100%_1px,1px_7px] bg-center bg-no-repeat [&::-webkit-slider-thumb]:h-3 [&::-webkit-slider-thumb]:w-[5px] [&::-webkit-slider-thumb]:appearance-none [&::-webkit-slider-thumb]:bg-white"
        />
        <button aria-label="Zoom in" className="ml-[7px] text-base font-bold">
          +
        </button>
        <span className="ml-4 w-[54px]">73%</span>
        <button aria-label="Fit to page">
          <Icon w={18} h={14} sw={1.4}>
            <path d="M1 1h15v11H1z" />
            <path d="M4 6V4h3M10 4h3v2M4 8v2h3M10 10h3V8" />
          </Icon>
        </button>
      </div>
    </footer>
  );
}

export default function App() {
  return (
    <div className="flex h-screen flex-col overflow-hidden bg-[#141414] font-['Open_Sans','Noto_Sans',sans-serif]">
      <TitleBar />
      <MenuBar />
      <Ribbon />
      <div className="flex min-h-0 flex-1">
        <ViewRail />
        <div className="flex min-w-0 flex-1 flex-col">
          <div className="flex min-h-0 flex-1">
            <ReportCanvas />
            <FiltersPane />
          </div>
          <PageTabs />
        </div>
        <VisualizationsPane />
        <DataPane />
      </div>
      <StatusBar />
    </div>
  );
}
